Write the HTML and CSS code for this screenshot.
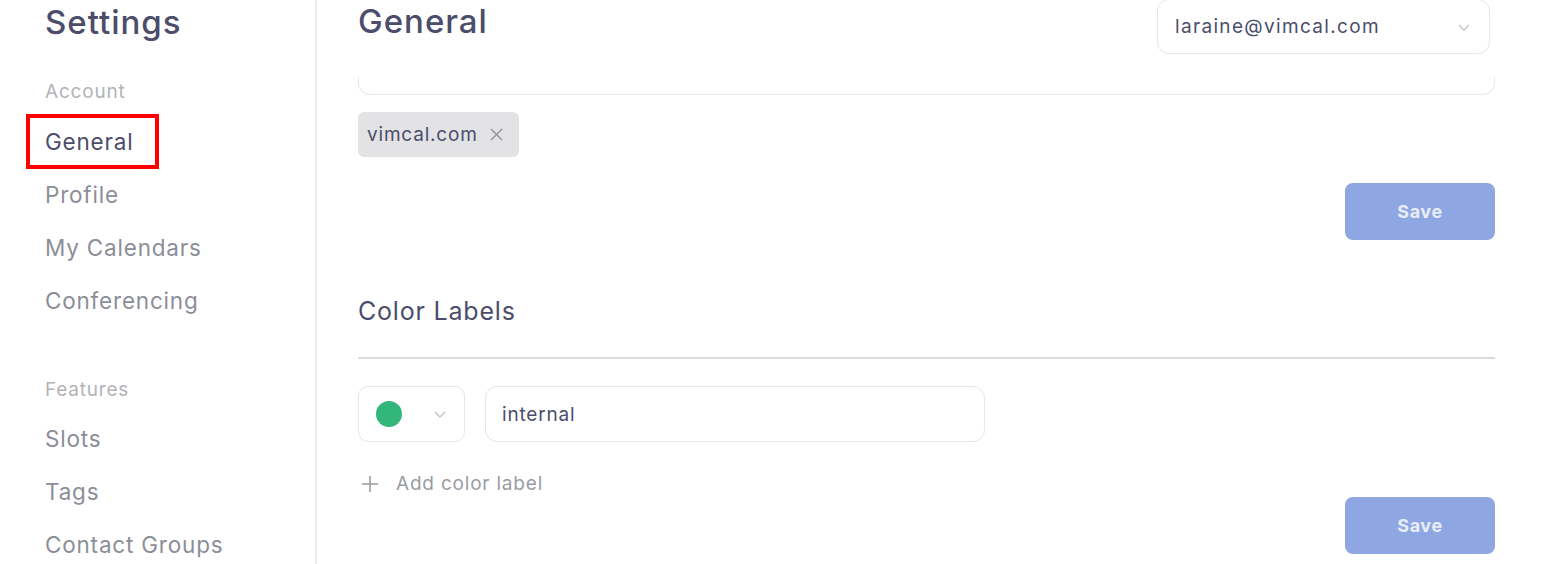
FILE: index.html
```html
<!DOCTYPE html>
<html lang="en">
  <head>
    <meta charset="UTF-8" />
    <title>Settings</title>
    <link rel="stylesheet" href="styles.css">
  </head>
  <body>
    <div id="app">
      <aside class="sidebar">
        <h1 class="sidebar-title">Settings</h1>
        <p class="nav-group">Account</p>
        <a class="nav-item active">General</a>
        <a class="nav-item">Profile</a>
        <a class="nav-item">My Calendars</a>
        <a class="nav-item">Conferencing</a>
        <p class="nav-group features">Features</p>
        <a class="nav-item">Slots</a>
        <a class="nav-item">Tags</a>
        <a class="nav-item">Contact Groups</a>
      </aside>

      <main class="main">
        <header class="main-header">
          <h2 class="page-title">General</h2>
          <div class="select account-select">
            <span>laraine@vimcal.com</span>
            <svg class="chevron" width="14" height="14" viewBox="0 0 14 14">
              <path d="M2 5l5 5 5-5" fill="none" stroke="#c4c4c8" stroke-width="1.4" />
            </svg>
          </div>
        </header>

        <div class="scroller">
          <div class="content">
            <div class="text-input domain-input"></div>
            <div class="chips">
              <span class="chip">
                vimcal.com
                <svg class="chip-x" width="13" height="13" viewBox="0 0 13 13">
                  <path d="M1 1l11 11M12 1L1 12" stroke="#96979e" stroke-width="1.5" />
                </svg>
              </span>
            </div>
            <div class="actions">
              <button class="save" type="button">Save</button>
            </div>

            <h3 class="section-title">Color Labels</h3>
            <hr class="divider" />

            <div class="label-row">
              <div class="select color-select">
                <span class="dot"></span>
                <svg class="chevron" width="14" height="14" viewBox="0 0 14 14">
                  <path d="M2 5l5 5 5-5" fill="none" stroke="#c4c4c8" stroke-width="1.4" />
                </svg>
              </div>
              <div class="text-input label-input">internal</div>
            </div>

            <div class="add-label">
              <svg width="18" height="18" viewBox="0 0 18 18">
                <path d="M9 1v16M1 9h16" stroke="#9a9ca4" stroke-width="1.6" />
              </svg>
              <span>Add color label</span>
            </div>

            <div class="actions bottom">
              <button class="save" type="button">Save</button>
            </div>
          </div>
        </div>
      </main>
    </div>
  </body>
</html>
```

FILE: styles.css
```css
* {
  box-sizing: border-box;
  padding: 0;
  margin: 0;
}

body {
  font-family: "Inter", "Noto Sans", sans-serif;
  letter-spacing: 0.05em;
  color: #4b4d6b;
  background: #fff;
  height: 100vh;
  overflow: hidden;
}

#app {
  display: flex;
  height: 100vh;
}

/* left navigation */
.sidebar {
  width: 317px;
  flex-shrink: 0;
  border-right: 2px solid #ededf1;
  padding-left: 45px;
  display: flex;
  flex-direction: column;
  align-items: flex-start;
}

.sidebar-title {
  font-size: 33px;
  font-weight: 500;
  letter-spacing: 0.03em;
  line-height: 42px;
  margin-top: 1px;
  color: #4b4d6b;
}

.nav-group {
  font-size: 19px;
  color: #b3b3b6;
  margin-top: 37px;
  line-height: 24px;
}

.nav-group.features {
  margin-top: 63px;
}

.nav-item {
  font-size: 22.5px;
  line-height: 29px;
  color: #8b8e98;
  margin-top: 24px;
}

.nav-group + .nav-item {
  margin-top: 22px;
}

.nav-item.active {
  color: #4b4d6b;
  outline: 4px solid #ff0000;
  padding: 9px 22px 9px 15px;
  margin-left: -15px;
  margin-top: 14px;
  margin-bottom: -9px;
}

/* main panel */
.main {
  flex: 1;
  padding: 0 57px 0 41px;
  display: flex;
  flex-direction: column;
  min-width: 0;
}

.main-header {
  display: flex;
  justify-content: space-between;
  align-items: flex-start;
  height: 77px;
  flex-shrink: 0;
}

.page-title {
  font-size: 33px;
  font-weight: 500;
  letter-spacing: 0.03em;
  line-height: 42px;
}

.select {
  display: flex;
  align-items: center;
  border: 1px solid #e6e6ea;
  border-radius: 12px;
  background: #fff;
}

.account-select {
  width: 333px;
  height: 55px;
  margin-top: -1px;
  margin-right: 5px;
  padding: 0 18px 0 17px;
  justify-content: space-between;
  font-size: 19px;
  letter-spacing: 0.07em;
}

.scroller {
  flex: 1;
  overflow: hidden;
}

.content {
  display: flex;
  flex-direction: column;
}

.text-input {
  border: 1px solid #e6e6ea;
  border-radius: 12px;
  height: 56px;
  font-size: 19px;
  display: flex;
  align-items: center;
  padding: 0 16px;
}

.domain-input {
  margin-top: -38px;
}

.chips {
  margin-top: 17px;
  display: flex;
}

.chip {
  background: #e3e3e5;
  border-radius: 6px;
  height: 45px;
  padding: 0 16px 0 9px;
  display: flex;
  align-items: center;
  gap: 12px;
  font-size: 19px;
}

.actions {
  display: flex;
  justify-content: flex-end;
  margin-top: 26px;
}

.save {
  width: 150px;
  height: 57px;
  border: none;
  border-radius: 8px;
  background: #8ea7e2;
  color: #e9edf8;
  font-family: inherit;
  letter-spacing: 0.03em;
  font-size: 18px;
  font-weight: 700;
}

.section-title {
  font-size: 25px;
  font-weight: 400;
  line-height: 32px;
  margin-top: 55px;
}

.divider {
  border: none;
  border-top: 2px solid #dcdce0;
  margin-top: 30px;
}

.label-row {
  display: flex;
  gap: 20px;
  margin-top: 27px;
}

.color-select {
  width: 107px;
  height: 56px;
  border-radius: 10px;
  padding: 0 17px;
  justify-content: space-between;
}

.dot {
  width: 26px;
  height: 26px;
  border-radius: 50%;
  background: #33b679;
}

.label-input {
  width: 500px;
}

.add-label {
  display: flex;
  align-items: center;
  gap: 17px;
  margin-top: 30px;
  font-size: 19px;
  color: #9a9ca4;
  padding-left: 3px;
}

.actions.bottom {
  margin-top: 2px;
}
```
